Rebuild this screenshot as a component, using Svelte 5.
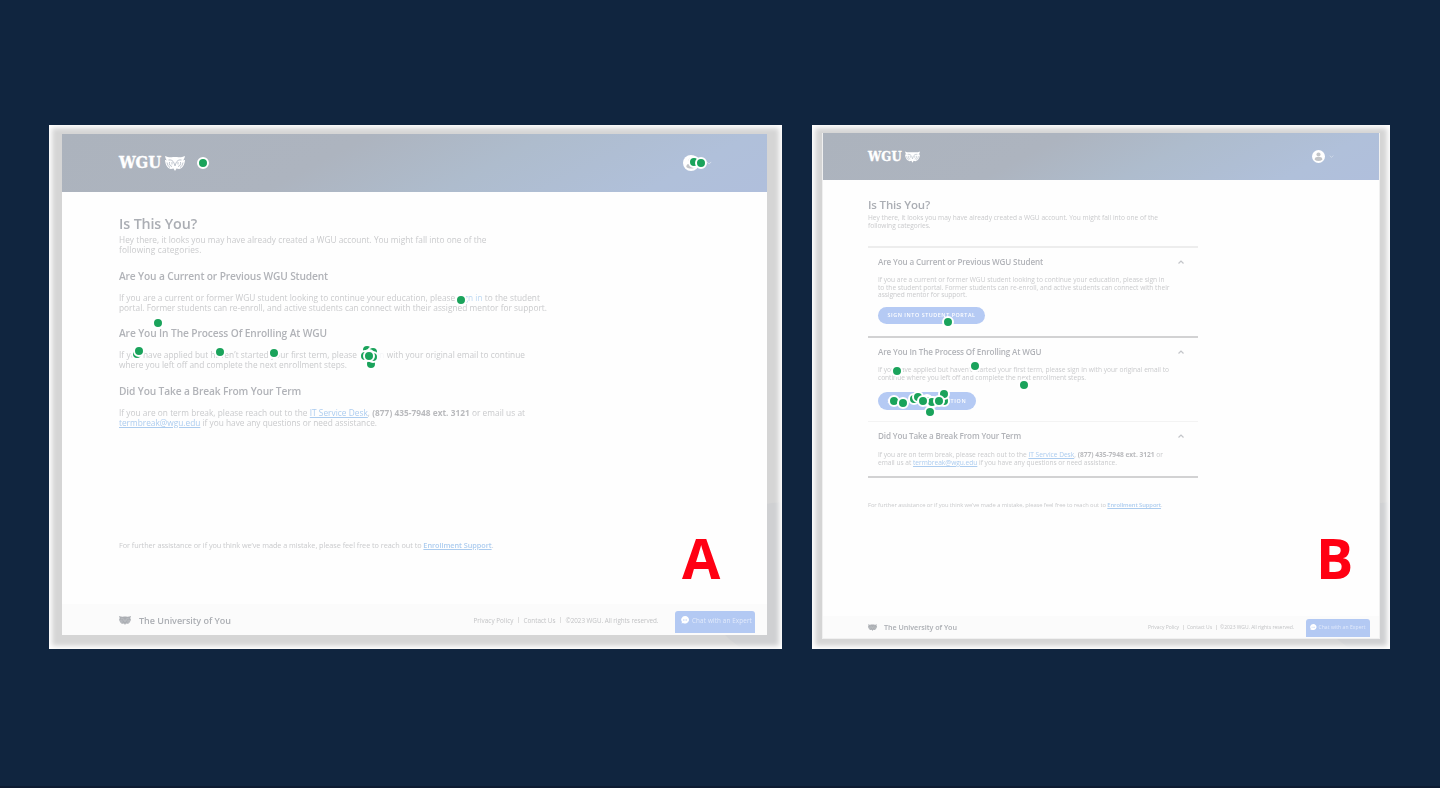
<script>
  const panels = [
    {
      id: 'a',
      letter: 'A',
      brand: 42,
      title: 78,
      intro: [
        ['Hey there, it looks you may have already created a WGU account. You might fall into one of the', 367.5],
        ['following categories.', 82.5]
      ],
      sections: [
        {
          title: 'Are You a Current or Previous WGU Student', width: 209,
          lines: [
            ['If you are a current or former WGU student looking to continue your education, please <a class="plain">sign in</a> to the student', 421],
            ['portal. Former students can re-enroll, and active students can connect with their assigned mentor for support.', 428]
          ]
        },
        {
          title: 'Are You In The Process Of Enrolling At WGU', width: 208,
          lines: [
            ['If you have applied but haven’t started your first term, please <a class="faint">sign in</a> with your original email to continue', 406],
            ['where you left off and complete the next enrollment steps.', 228]
          ]
        },
        {
          title: 'Did You Take a Break From Your Term', width: 182,
          lines: [
            ['If you are on term break, please reach out to the <a>IT Service Desk</a>, <b>(877) 435-7948 ext. 3121</b> or email us at', 406],
            ['<a>termbreak@wgu.edu</a> if you have any questions or need assistance.', 258]
          ]
        }
      ],
      help: 374.5,
      foot: { name: 92, links: [40, 32, 93], chat: 60 },
      dots: [
        [203, 163], [694, 162], [701, 163], [460.5, 300], [158, 323], [137, 353.5], [138.7, 351],
        [220, 352], [273.5, 353], [366.5, 350.2], [373, 351.5], [370.5, 363.7], [369, 354.5], [365.2, 355.5], [373, 356.5], [368.5, 355.5]
      ]
    },
    {
      id: 'b',
      letter: 'B',
      brand: 34,
      title: 62,
      intro: [
        ['Hey there, it looks you may have already created a WGU account. You might fall into one of the', 290],
        ['following categories.', 62.5]
      ],
      sections: [
        {
          title: 'Are You a Current or Previous WGU Student', width: 165,
          lines: [
            ['If you are a current or former WGU student looking to continue your education, please sign in', 286.5],
            ['to the student portal. Former students can re-enroll, and active students can connect with their', 291.5],
            ['assigned mentor for support.', 89]
          ],
          button: ['SIGN INTO STUDENT PORTAL', 88]
        },
        {
          title: 'Are You In The Process Of Enrolling At WGU', width: 163.5,
          lines: [
            ['If you have applied but haven’t started your first term, please sign in with your original email to', 291],
            ['continue where you left off and complete the next enrollment steps.', 208]
          ],
          button: ['SIGN INTO APPLICATION', 79]
        },
        {
          title: 'Did You Take a Break From Your Term', width: 143,
          lines: [
            ['If you are on term break, please reach out to the <a>IT Service Desk</a>, <b>(877) 435-7948 ext. 3121</b> or', 285],
            ['email us at <a>termbreak@wgu.edu</a> if you have any questions or need assistance.', 239]
          ]
        }
      ],
      help: 294.5,
      foot: { name: 73, links: [31, 25, 74], chat: 47 },
      dots: [
        [947.7, 322], [897, 370.5], [974.5, 366], [1024, 385], [914, 399], [918, 397], [927, 400], [933, 402],
        [944, 401], [928, 401], [943.7, 394], [932, 402], [923, 401], [939, 401], [930.4, 411.5], [894, 401], [902.7, 402.7]
      ]
    }
  ];
  const links = ['Privacy Policy', 'Contact Us', '©2023 WGU. All rights reserved.'];

  // Tracks a line of text out (or in) until it fills the given width.
  function fit(node, width) {
    const natural = node.getBoundingClientRect().width;
    const count = node.textContent.length;
    node.style.letterSpacing = (width - natural) / count + 'px';
  }
</script>

{#snippet owl()}
  <svg class="owl" viewBox="0 0 40 30">
    <path fill="currentColor" d="M0 0c6 3 12 3 16 2h8c4 1 10 1 16-2-1 5-3 8-4 9 3-1 3-1 4-1-1 11-6 17-12 18l-5-1-3 5-3-5-5 1C6 25 1 19 0 8c1 0 2 0 4 1C2 7 1 4 0 0z" />
    <path class="cut" d="M7 8c5-1 9 1 11 6l2 6 2-6c2-5 6-7 11-6M9 12c-1 5 1 8 5 9M31 12c1 5-1 8-5 9M14 12v5M26 12v5M4 13c1 5 3 8 6 10M36 13c-1 5-3 8-6 10" />
  </svg>
{/snippet}

<main>
  {#each panels as p}
    <section class="frame {p.id}">
      <div class="page">
        <header>
          <div class="brand"><span class="wgu" use:fit={p.brand}>WGU</span>{@render owl()}</div>
          <div class="account">
            <svg class="avatar" viewBox="0 0 24 24"><circle cx="12" cy="12" r="12" fill="#fff" /><circle cx="12" cy="8.4" r="3.8" fill="#c3c5c8" /><path d="M5 18c0-5 3-5 7-5s7 0 7 5c-4 3-10 3-14 0z" fill="#c3c5c8" /></svg>
            <svg class="chev" viewBox="0 0 8 5"><path d="M1 1l3 3 3-3" fill="none" stroke="#d5ddeb" stroke-width="1.3" /></svg>
          </div>
        </header>
        <div class="content">
          <h1><span use:fit={p.title}>Is This You?</span></h1>
          <div class="intro">
            {#each p.intro as [text, w]}<p><span use:fit={w}>{text}</span></p>{/each}
          </div>
          <div class="sections">
            {#each p.sections as s}
              <article>
                <h2>
                  <span use:fit={s.width}>{s.title}</span>
                  {#if p.id === 'b'}<svg class="caret" viewBox="0 0 8 6"><path d="M1.5 4.5L4 2l2.500 2.500" fill="none" stroke="#c3c5c9" stroke-width="1.2" /></svg>{/if}
                </h2>
                <div class="copy">
                  {#each s.lines as [text, w]}<p><span use:fit={w}>{@html text}</span></p>{/each}
                </div>
                {#if s.button}<div class="pill"><span use:fit={s.button[1]}>{s.button[0]}</span></div>{/if}
              </article>
            {/each}
          </div>
          <p class="help"><span use:fit={p.help}>For further assistance or if you think we’ve made a mistake, please feel free to reach out to <a class="strong">Enrollment Support</a>.</span></p>
        </div>
        <footer>
          {@render owl()}
          <span class="name"><span use:fit={p.foot.name}>The University of You</span></span>
          <div class="links">
            {#each links as l, i}
              {#if i}<i></i>{/if}<span use:fit={p.foot.links[i]}>{l}</span>
            {/each}
          </div>
          <div class="chat">
            <svg viewBox="0 0 16 16"><path d="M8 0a8 7.500 0 1 1-4 14l-3 1 1-3A8 7.500 0 0 1 8 0z" fill="#fff" /><path d="M4 8h8" stroke="#b3c9f3" stroke-width="1.800" stroke-dasharray="2 1" /></svg>
            <span use:fit={p.foot.chat}>Chat with an Expert</span>
          </div>
        </footer>
      </div>
      <strong class="letter">{p.letter}</strong>
    </section>
  {/each}
  {#each panels as p}
    {#each p.dots as [x, y]}
      <span class="dot" style="left:{x}px;top:{y}px"></span>
    {/each}
  {/each}
</main>

<style>
  :global(body) { margin: 0; background: #10253f; }
  main {
    position: relative; box-sizing: border-box; width: 1440px; height: 788px; overflow: hidden;
    padding: 125px 50px 0 49px; display: flex; align-items: flex-start; justify-content: space-between;
    background: #10253f; border-bottom: 2px solid #0d1b31;
    font-family: "Open Sans", sans-serif;
  }
  h1, h2, p { margin: 0; font-size: inherit; }
  .frame { position: relative; box-sizing: border-box; height: 524px; overflow: hidden; background: radial-gradient(circle at 100% 87%, #cfd0d2 0 78px, #d5d5d5 79px); box-shadow: inset 0 0 5px 3px #fff; }
  .a { width: 733px; padding: 9px 15px 14px 13px; }
  .b { width: 578px; padding: 8px 10px 10px 10px; }
  .page { box-sizing: border-box; height: 100%; display: flex; flex-direction: column; background: #fefefe; color: #c9cacc; white-space: nowrap; }
  .a .page { height: 501px; }
  .b .page { height: 506px; border: solid #f0f0f0; border-width: 0 1px 1px; }
  header { display: flex; justify-content: space-between; align-items: center; flex: none; box-sizing: border-box; background: linear-gradient(152deg, #acb3bd 0%, #adb4bf 38%, #aebccd 60%, #b0c0da 85%, #b0bfdc 100%); }
  .a header { height: 58px; padding: 0 55.500px 0 57px; }
  .b header { height: 47px; padding: 0 45px 0 45px; }
  .brand, .account { display: flex; align-items: center; color: #fff; }
  .wgu { display: inline-block; font-family: "DejaVu Serif", serif; font-stretch: condensed; font-weight: 700; line-height: 1; -webkit-text-stroke: 0.35px #fff; }
  .a .wgu { font-size: 16.5px; }
  .b .wgu { font-size: 13px; }
  .owl { display: block; flex: none; }
  .cut { fill: none; stroke: #b4bbc5; stroke-width: 1.7; }
  .a .brand .owl { width: 20px; height: 15px; margin-left: 4px; }
  .b .brand .owl { width: 15px; height: 12px; margin-left: 3px; }
  .a .avatar { width: 16px; height: 16px; }
  .a .chev { width: 6px; height: 4px; margin-left: 7px; }
  .b .avatar { width: 13px; height: 13px; }
  .b .chev { width: 5px; height: 3px; margin-left: 4px; }
  .content, footer { filter: blur(0.35px); }
  .content { flex: 1; }
  .a .content { padding: 22px 57px 0; }
  .b .content { padding: 16px 45px 0; }
  h1 { font-weight: 600; color: #abaeb4; }
  .a h1 { font-size: 14.3px; line-height: 20px; }
  .b h1 { font-size: 11.5px; line-height: 17px; }
  h2 { display: flex; justify-content: space-between; align-items: center; font-weight: 600; color: #b1b3b8; }
  .a p { font-size: 8.3px; line-height: 10px; }
  .a .intro { padding-top: 1px; }
  .a h2 { font-size: 10.2px; line-height: 16px; margin-top: 13px; }
  .a article + article h2 { margin-top: 12px; }
  .a .copy { padding-top: 9px; height: 20.400px; }
  .a .help { font-size: 7.3px; margin-top: 112px; }
  .b .intro { padding-top: 1px; }
  .b p { font-size: 6.6px; line-height: 7.7px; }
  .b .sections { width: 330px; margin-top: 16.6px; border-top: 2px solid #ededed; border-bottom: 2px solid #d2d2d3; }
  .b article { box-sizing: border-box; padding: 7px 13px 0 10px; }
  .b article:nth-child(1) { height: 88px; }
  .b article:nth-child(2) { height: 85px; border-top: 2px solid #d2d2d3; }
  .b article:nth-child(3) { height: 55px; border-top: 1px solid #f3f3f3; }
  .b h2 { font-size: 8.1px; line-height: 14px; }
  .caret { width: 8px; height: 6px; }
  .b .copy { padding-top: 7px; }
  .b article:nth-child(3) .copy { padding-top: 8px; }
  .b .help { font-size: 5.8px; margin-top: 24px; }
  .content :global(a) { color: #acccef; text-decoration: underline; text-decoration-thickness: 0.5px; text-underline-offset: 1px; }
  .content :global(a.plain) { color: #bcd8f2; text-decoration: none; }
  .content :global(a.faint) { color: #f5f6f8; text-decoration: none; }
  .content :global(a.strong) { font-weight: 600; }
  .content :global(b) { font-weight: 700; color: #b9babd; }
  .pill { display: flex; justify-content: center; align-items: center; width: 107px; height: 17.500px; margin-top: 7.5px; border-radius: 9px; background: #b5caf4; color: #fff; font-size: 5.4px; font-weight: 600; }
  article:nth-child(2) .pill { width: 98px; margin-top: 11px; }
  footer { display: flex; align-items: center; box-sizing: border-box; background: #fbfbfb; color: #abaeb3; flex: none; }
  .a footer { height: 31px; padding: 1px 12px 0 57px; }
  .b footer { height: 22px; padding: 0 9px 0 45px; }
  .a footer .owl { width: 12px; height: 9px; margin-right: 8px; }
  .b footer .owl { width: 9px; height: 7px; margin-right: 7px; }
  footer .cut { stroke: #d3d5d7; stroke-width: 1.2; }
  .name { font-weight: 600; }
  .a .name { font-size: 9px; }
  .b .name { font-size: 7.2px; }
  .links { display: flex; align-items: center; margin-left: auto; color: #c2c3c5; }
  .links i { width: 1px; background: #dedede; }
  .a .links { font-size: 6.3px; margin-right: 16.500px; }
  .b .links { font-size: 5px; margin-right: 12px; }
  .a .links i { height: 6px; margin: 0 4.500px; }
  .b .links i { height: 5px; margin: 0 3.500px; }
  .chat { display: flex; align-items: center; box-sizing: border-box; background: #b3c9f3; color: #e2eafb; }
  .a .chat { width: 80px; height: 22px; padding: 0 4px 3px 6px; margin-top: 3px; border-radius: 3px 3px 0 0; font-size: 6.3px; }
  .b .chat { width: 64px; height: 18px; padding: 0 3px 2px 4px; margin-top: 2px; border-radius: 3px 3px 0 0; font-size: 5px; }
  .chat svg { flex: none; }
  .a .chat svg { width: 8px; height: 8px; margin-right: 3px; }
  .b .chat svg { width: 6.500px; height: 6.500px; margin-right: 2px; }
  .letter { position: absolute; color: #ff0013; font-size: 55.500px; font-weight: 700; line-height: 76px; top: 394.500px; }
  .a .letter { left: 633px; }
  .b .letter { left: 504px; }
  .dot { position: absolute; width: 8px; height: 8px; margin: -6px 0 0 -6px; border: 2px solid #fff; border-radius: 50%; background: #1aa35b; }
</style>
